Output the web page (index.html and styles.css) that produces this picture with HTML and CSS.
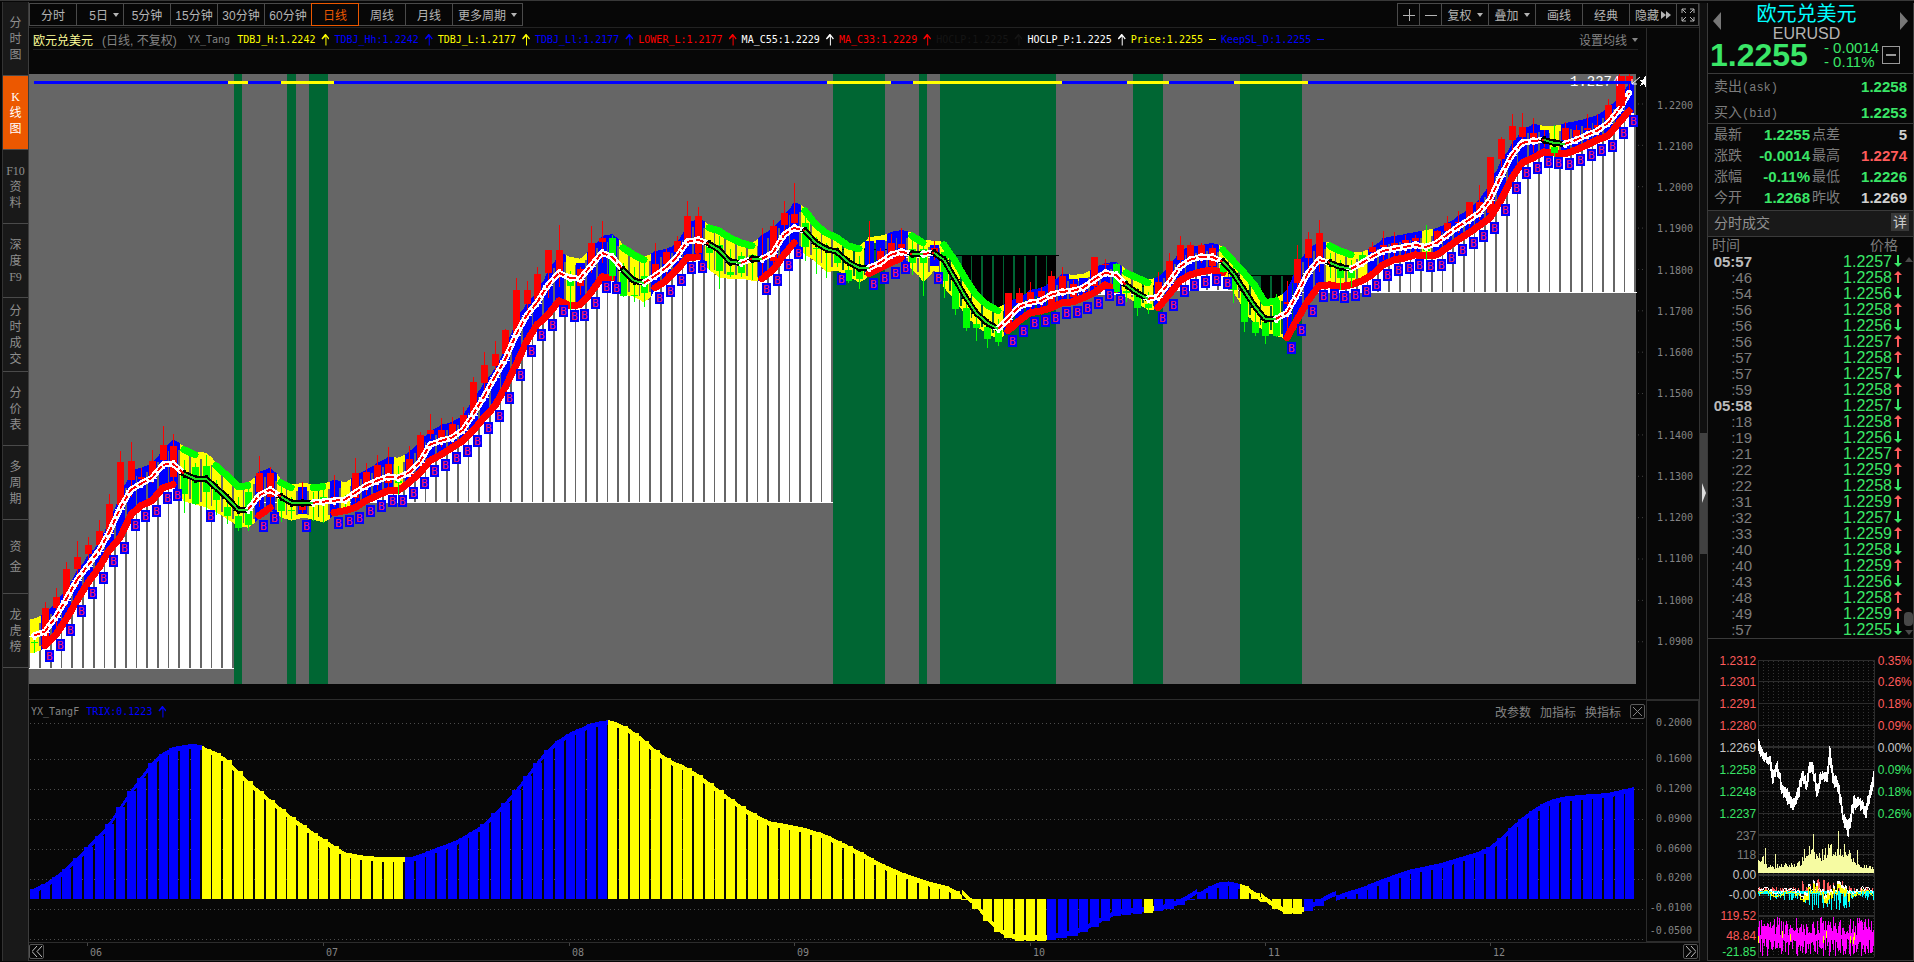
FILE: index.html
```html
<!DOCTYPE html>
<html lang="zh-CN">

<head>
    <meta charset="UTF-8">
    <meta name="viewport" content="width=device-width, initial-scale=1.0">
    <title>欧元兑美元 EURUSD</title>
    <link rel="stylesheet" href="styles.css">
</head>

<body>
    <nav class="side">
        <button>分<br>时<br>图</button>
        <button class="active">K<br>线<br>图</button>
        <button>F10<br>资<br>料</button>
        <button>深<br>度<br>F9</button>
        <button>分<br>时<br>成<br>交</button>
        <button>分<br>价<br>表</button>
        <button>多<br>周<br>期</button>
        <button class="loose">资<br>金</button>
        <button>龙<br>虎<br>榜</button>
    </nav>

    <main class="main">
        <div class="toolbar">
            <div class="group periods">
                <button>分时</button>
                <button class="drop">5日<i class="caret"></i></button>
                <button>5分钟</button>
                <button>15分钟</button>
                <button>30分钟</button>
                <button>60分钟</button>
                <button class="active">日线</button>
                <button>周线</button>
                <button>月线</button>
                <button class="more">更多周期<i class="caret"></i></button>
            </div>
            <div class="group tools">
                <button class="small" aria-label="放大"><svg width="12" height="12"><path d="M0 6.5H12M6.5 0V12"/></svg></button>
                <button class="small" aria-label="缩小"><svg width="12" height="12"><path d="M0 6.5H12"/></svg></button>
                <button>复权<i class="caret"></i></button>
                <button>叠加<i class="caret"></i></button>
                <button>画线</button>
                <button>经典</button>
                <button>隐藏<svg class="solid" width="10" height="8"><path d="M0 0L5 4L0 8ZM5 0L10 4L5 8Z"/></svg></button>
                <button class="small" aria-label="全屏"><svg width="14" height="14"><path d="M1 5V1H5M1 1L5 5M9 1H13V5M13 1L9 5M1 9V13H5M1 13L5 9M9 13H13V9M13 13L9 9"/></svg></button>
            </div>
        </div>

        <section class="panel price-panel">
            <div class="plot">
                <div class="info">
                    <span class="name">欧元兑美元</span>
                    <span class="mode">(日线, 不复权)</span>
                    <span class="formula">YX_Tang</span>
                    <span class="ind yellow">TDBJ_H:1.2242</span>
                    <span class="ind blue">TDBJ_Hh:1.2242</span>
                    <span class="ind yellow">TDBJ_L:1.2177</span>
                    <span class="ind blue">TDBJ_Ll:1.2177</span>
                    <span class="ind red">LOWER_L:1.2177</span>
                    <span class="ind white">MA_C55:1.2229</span>
                    <span class="ind red">MA_C33:1.2229</span>
                    <span class="ind black">HOCLP:1.2225</span>
                    <span class="ind white">HOCLP_P:1.2225</span>
                    <span class="ind yellow flat">Price:1.2255</span>
                    <span class="ind blue flat">KeepSL_D:1.2255</span>
                    <button class="ma-set">设置均线<i class="caret"></i></button>
                </div>
                <svg id="price" class="chart" viewBox="29 74 1617 610" preserveAspectRatio="none"></svg>
            </div>
            <div class="axis price-axis">
                <span>1.2200</span><span>1.2100</span><span>1.2000</span><span>1.1900</span><span>1.1800</span>
                <span>1.1700</span><span>1.1600</span><span>1.1500</span><span>1.1400</span><span>1.1300</span>
                <span>1.1200</span><span>1.1100</span><span>1.1000</span><span>1.0900</span>
            </div>
        </section>

        <section class="panel trix-panel">
            <div class="plot">
                <div class="subinfo">
                    <span class="formula">YX_TangF</span>
                    <span class="ind blue">TRIX:0.1223</span>
                    <div class="actions">
                        <button>改参数</button>
                        <button>加指标</button>
                        <button>换指标</button>
                        <button class="close" aria-label="关闭"><svg width="9" height="9"><path d="M0 0L9 9M9 0L0 9"/></svg></button>
                    </div>
                </div>
                <svg id="trix" class="chart" viewBox="29 720 1617 222" preserveAspectRatio="none"></svg>
            </div>
            <div class="axis trix-axis">
                <span>0.2000</span><span>0.1600</span><span>0.1200</span><span>0.0900</span>
                <span>0.0600</span><span>0.0200</span><span>-0.0100</span><span>-0.0500</span>
            </div>
        </section>

        <div class="dates">
            <div><button aria-label="向前"><svg width="10" height="11"><path d="M5 0L0 5.5L5 11M10 0L5 5.5L10 11"/></svg></button></div>
            <span>06</span><span>07</span><span>08</span><span>09</span><span>10</span><span>11</span><span>12</span>
            <div class="next"><button aria-label="向后"><svg width="10" height="11"><path d="M0 0L5 5.5L0 11M5 0L10 5.5L5 11"/></svg></button></div>
        </div>
    </main>

    <div class="splitter"><div class="handle"></div></div>

    <aside class="quote">
        <header class="head">
            <div class="title">
                <button class="arrow prev" aria-label="上一个"></button>
                <h1>欧元兑美元<small>EURUSD</small></h1>
                <button class="arrow next" aria-label="下一个"></button>
            </div>
            <div class="last">
                <strong>1.2255</strong>
                <div class="change"><span>- 0.0014</span><span>- 0.11%</span></div>
                <button class="fold" aria-label="收起"></button>
            </div>
        </header>
        <dl class="book">
            <dt>卖出<span>(ask)</span></dt><dd>1.2258</dd>
            <dt>买入<span>(bid)</span></dt><dd>1.2253</dd>
        </dl>
        <dl class="stats">
            <dt>最新</dt><dd>1.2255</dd><dt>点差</dt><dd class="plain">5</dd>
            <dt>涨跌</dt><dd>-0.0014</dd><dt>最高</dt><dd class="up">1.2274</dd>
            <dt>涨幅</dt><dd>-0.11%</dd><dt>最低</dt><dd>1.2226</dd>
            <dt>今开</dt><dd>1.2268</dd><dt>昨收</dt><dd class="plain">1.2269</dd>
        </dl>
        <div class="deals-head"><h2>分时成交</h2><button>详</button></div>
        <div class="deals-wrap">
            <table class="deals">
                <thead><tr><th>时间</th><th>价格</th></tr></thead>
                <tbody id="deals"></tbody>
            </table>
            <div class="scroll"><i class="tri"></i><i class="thumb"></i><i class="tri down"></i></div>
        </div>
        <svg id="mini" viewBox="1708 639 205 322"></svg>
    </aside>

    <script src="chart.js"></script>
</body>

</html>
```
FILE: styles.css
```css
* {
    box-sizing: border-box;
}

body {
    margin: 0;
    height: 100vh;
    min-height: 960px;
    display: flex;
    padding: 2px 0 1px 2px;
    background-color: #070707;
    border-top: 1px solid #383838;
    color: #848484;
    font-family: "DejaVu Sans Mono", "Noto Sans CJK SC", monospace;
    font-size: 12px;
    overflow: hidden;
}

button {
    margin: 0;
    padding: 0;
    border: none;
    background: none;
    color: inherit;
    font: inherit;
    cursor: pointer;
}

h1, h2, dl, dd {
    margin: 0;
    font-weight: normal;
}

button svg {
    fill: none;
    stroke: currentColor;
    stroke-width: 1;
}

button svg.solid {
    fill: currentColor;
    stroke: none;
    margin-left: 2px;
}

.caret {
    border: 3px solid transparent;
    border-top: 4px solid currentColor;
    border-bottom: none;
    margin-left: 5px;
}

/* left navigation */
.side {
    width: 27px;
    flex: none;
    display: flex;
    flex-direction: column;
    margin-top: -1px;
    background-color: #191919;
    border-left: 1px solid #333;
    border-right: 1px solid #3c3c3c;
}

.side button {
    height: 74px;
    border-bottom: 1px solid #4a4a4a;
    line-height: 16px;
    font-family: "Liberation Serif", "Noto Sans CJK SC", serif;
    color: #8e8e8e;
}

.side button.active {
    background-color: #ec5800;
    color: #fff;
}

.side button.loose {
    line-height: 20px;
}

/* main column */
.main {
    flex: 1;
    min-width: 0;
    display: flex;
    flex-direction: column;
    border-right: 1px solid #333;
    border-bottom: 1px solid #333;
}

.toolbar {
    height: 25px;
    flex: none;
    display: flex;
    justify-content: space-between;
    border-bottom: 1px solid #222;
    color: #b4b4b4;
}

.group {
    display: flex;
    height: 23px;
}

.group button {
    width: 48px;
    margin-right: -1px;
    border: 1px solid #4a4a4a;
    display: flex;
    align-items: center;
    justify-content: center;
    font-family: "Liberation Sans", "Noto Sans CJK SC", sans-serif;
    white-space: nowrap;
}

.group .more {
    width: 71px;
}

.group .drop {
    justify-content: flex-end;
    padding-right: 4px;
}

.group .small {
    width: 23px;
}

.tools button:last-child {
    margin-right: 0;
}

.group .active {
    border-color: #ec5800;
    color: #ec5800;
    z-index: 1;
}

.panel {
    display: flex;
    min-height: 0;
}

.price-panel {
    flex: 672;
    border-bottom: 1px solid #2c2c2c;
}

.trix-panel {
    flex: 243;
    border-bottom: 1px solid #2c2c2c;
}

.plot {
    flex: 1;
    min-width: 0;
    display: flex;
    flex-direction: column;
}

.chart {
    display: block;
    width: 100%;
    flex: 1;
    min-height: 0;
    shape-rendering: crispEdges;
}

.price-panel .chart {
    margin: 24px 0 15px;
}

.info {
    height: 22px;
    margin: 0 8px 0 4px;
    padding-top: 2px;
    flex: none;
    display: flex;
    align-items: center;
    border-bottom: 1px solid #222;
    white-space: nowrap;
}

.info .name {
    color: #ffff99;
    width: 69px;
}

.info .mode {
    width: 86px;
    font-family: "Liberation Sans", "Noto Sans CJK SC", sans-serif;
}

.formula {
    font-size: 10px;
    margin-right: 7px;
}

.ind {
    font-size: 10px;
    display: flex;
    align-items: center;
    margin-right: 5px;
}

/* up arrow behind each indicator value */
.ind::after {
    content: "";
    width: 8px;
    height: 12px;
    margin-left: 6px;
    background-color: currentColor;
    clip-path: polygon(4px 0, 8px 5px, 7px 6px, 5px 3px, 5px 12px, 4px 12px, 4px 3px, 1px 6px, 0 5px);
}

.ind.flat::after {
    width: 7px;
    height: 1px;
    clip-path: none;
}

.yellow { color: #ff0; }
.blue { color: #00f; }
.red { color: #f00; }
.white { color: #fff; }
.black { color: #151515; }

.ma-set {
    margin-left: auto;
    display: flex;
    align-items: center;
}

.subinfo {
    height: 20px;
    flex: none;
    display: flex;
    align-items: center;
    padding: 4px 1px 0 2px;
}

.actions {
    margin-left: auto;
    display: flex;
    align-items: center;
    gap: 9px;
}

.actions .close {
    width: 15px;
    height: 15px;
    border: 1px solid #5a5a5a;
    border-radius: 2px;
    display: flex;
    align-items: center;
    justify-content: center;
}

.axis {
    width: 53px;
    flex: none;
    border-left: 1px solid #2c2c2c;
    font-size: 10px;
    line-height: 12px;
    text-align: right;
    padding-right: 6px;
}

.price-axis {
    display: flex;
    flex-direction: column;
    padding-top: 57px;
    padding-bottom: 36px;
}

.price-axis span {
    flex: 1;
    display: flex;
    align-items: center;
    justify-content: flex-end;
}

.trix-axis {
    display: grid;
    grid-template-rows: 29fr 36fr 30fr 30fr 30fr 30fr 30fr 23fr 4fr;
    align-items: end;
    border: 1px solid #2c2c2c;
}

.dates {
    height: 17px;
    flex: none;
    display: grid;
    grid-template-columns: 58fr 236fr 246fr 225fr 236fr 235fr 225fr 193fr 16fr;
    align-items: center;
    font-size: 10px;
}

.dates span {
    padding: 2px 0 0 3px;
    line-height: 15px;
    background: linear-gradient(#444, #444) 0 0 / 1px 3px no-repeat;
}

.dates button {
    width: 15px;
    height: 15px;
    border: 1px solid #555;
    border-radius: 2px;
    display: flex;
    align-items: center;
    justify-content: center;
    color: #c4c4c4;
}

.splitter {
    width: 7px;
    flex: none;
    display: flex;
    flex-direction: column;
    justify-content: center;
    background-color: #101010;
}

.handle {
    height: 121px;
    margin-top: 22px;
    background-color: #414141;
    display: flex;
    align-items: center;
}

.handle::before {
    content: "";
    margin-left: 2px;
    border: 10px solid transparent;
    border-left: 4px solid #ddd;
    border-right: none;
}

/* right quote column */
.quote {
    width: 207px;
    flex: none;
    display: flex;
    flex-direction: column;
    border: 1px solid #3a3a3a;
    border-top: none;
    font-family: "Liberation Sans", "Noto Sans CJK SC", sans-serif;
    color: #3ae667;
}

.head {
    height: 71px;
    border-bottom: 1px solid #3a3a3a;
}

.title {
    display: flex;
    justify-content: space-between;
    padding: 0 5px;
    height: 38px;
}

.title h1 {
    padding-right: 8px;
    font-size: 20px;
    line-height: 23px;
    color: #0ff;
    text-align: center;
}

.title small {
    display: block;
    font-size: 16px;
    line-height: 16px;
    color: #b4b4b4;
}

.arrow {
    border: 9px solid transparent;
    height: 18px;
    margin-top: 9px;
}

.arrow.prev {
    border-left: none;
    border-right: 8px solid #777;
}

.arrow.next {
    border-right: none;
    border-left: 8px solid #777;
}

.last {
    display: flex;
    align-items: center;
    padding: 0 13px 0 2px;
}

.last strong {
    font-size: 32px;
    line-height: 24px;
    font-weight: bold;
}

.change {
    margin-left: auto;
    margin-right: 3px;
    font-size: 15px;
    line-height: 14px;
}

.change span {
    display: block;
}

.fold {
    width: 18px;
    height: 18px;
    border: 1px solid #999;
    background: linear-gradient(#999, #999) center / 10px 2px no-repeat;
}

dt {
    color: #7d7d7d;
    font-size: 14px;
}

dt span {
    font-family: "Liberation Mono", monospace;
    font-size: 12px;
}

dd {
    font-size: 15px;
    font-weight: bold;
    text-align: right;
}

.book {
    height: 50px;
    display: grid;
    grid-template-columns: 1fr 1fr;
    align-items: center;
    padding: 0 6px;
    border-bottom: 1px solid #3a3a3a;
    line-height: 24px;
}

.stats {
    height: 87px;
    display: grid;
    grid-template-columns: 28px 66px 30px 1fr;
    align-items: center;
    padding: 0 6px 3px;
    column-gap: 2px;
    line-height: 21px;
    border-bottom: 1px solid #3a3a3a;
}

.stats .up {
    color: #ff5b5b;
}

.stats .plain {
    color: #d0d0d0;
}

.deals-head {
    height: 26px;
    display: flex;
    align-items: center;
    justify-content: space-between;
    padding: 0 4px 2px 6px;
    background-color: #191919;
    border-bottom: 1px solid #3a3a3a;
}

.deals-head h2 {
    font-size: 14px;
    color: #909090;
}

.deals-head button {
    width: 18px;
    height: 18px;
    background-color: #383838;
    color: #ccc;
    font-size: 14px;
    line-height: 18px;
}

.deals-wrap {
    display: flex;
    height: 402px;
    border-bottom: 1px solid #3a3a3a;
}

.deals {
    flex: 1;
    border-collapse: collapse;
    font-size: 16px;
    line-height: 16px;
}

.deals th, .deals td {
    padding: 0;
    height: 16px;
}

.deals th {
    height: 17px;
    font-size: 14px;
    line-height: 16px;
    font-weight: normal;
    text-align: left;
    color: #7d7d7d;
    padding-left: 4px;
}

.deals th + th {
    text-align: right;
    padding-right: 6px;
}

.deals td:first-child {
    width: 44px;
    text-align: right;
    color: #7d7d7d;
    font-size: 15px;
}

.deals td.minute {
    color: #bbb;
    font-weight: bold;
}

.deals td + td {
    text-align: right;
    padding-right: 2px;
}

.deals svg {
    margin-left: 2px;
    fill: #3ae667;
}

.deals svg.up {
    fill: #ff5b5b;
}

.scroll {
    width: 9px;
    display: flex;
    flex-direction: column;
    align-items: center;
    padding: 20px 0 3px;
}

.tri {
    border: 4px solid transparent;
    border-top: none;
    border-bottom: 5px solid #484848;
}

.tri.down {
    transform: rotate(180deg);
}

.thumb {
    width: 9px;
    height: 14px;
    margin: auto 0 4px;
    border-radius: 4px;
    background-color: #484848;
}

#mini {
    width: 100%;
    shape-rendering: crispEdges;
    font-size: 12px;
}
```
FILE: chart.js
```js
const STEP = 10.705;
const FIRST = 34.3;
const BLUE = "#0000ff", YELLOW = "#ffff00", RED = "#ff0000", GREEN = "#00ff00";

// type: b = blue band, y = yellow, g = yellow with green cap, h = green cap + B,
//       m = yellow + B, n = yellow with a blue core + B
// [type, upper, lower, ma, wick top, body top, body bottom, wick bottom]
// values are thirds of a pixel below the base of the block
const blocks = [
    { base: 960, bars: [
        ["y",898,1000,948,950,965,969,1000], ["b",880,985,935,846,865,970,975], ["b",845,950,890,803,832,865,920],
        ["b",805,905,840,726,747,835,860], ["b",750,850,780,663,711,747,800], ["b",705,795,738,652,675,702,750],
        ["b",665,750,693,600,633,675,700], ["b",600,700,640,522,552,640,660], ["b",520,660,568,393,426,555,570],
        ["b",450,590,510,366,423,480,530], ["b",445,565,493,445,472,478,505], ["b",430,550,475,390,423,475,490],
        ["b",385,510,435,318,375,420,440], ["b",360,500,432,342,378,470,485], ["g",380,545,463,420,463,522,578],
        ["g",395,555,478,430,442,552,556], ["m",398,565,478,405,438,515,570], ["g",430,580,505,480,505,540,585],
        ["g",460,600,535,530,560,588,612], ["g",492,620,570,530,588,623,632], ["g",488,625,570,505,515,615,632],
        ["b",455,595,528,408,460,515,560], ["b",445,570,510,440,460,530,560], ["g",480,595,530,500,530,573,605],
        ["g",495,602,550,530,570,573,598], ["n",490,595,550,487,550,570,580], ["g",495,600,550,515,540,544,602],
        ["g",493,608,545,500,532,545,610], ["b",480,585,543,465,530,545,560], ["m",490,580,541,525,540,543,560],
        ["b",465,570,520,414,460,535,545], ["b",450,550,498,430,456,500,525], ["b",430,535,482,405,435,490,510],
        ["b",410,520,472,380,432,490,500], ["m",413,520,474,438,484,488,525], ["b",395,495,460,378,418,465,475],
        ["b",360,465,425,335,345,430,440], ["b",332,430,375,282,330,342,357], ["b",315,410,362,294,330,360,380],
        ["b",305,390,353,292,312,345,370], ["b",285,370,330,262,285,325,340], ["b",235,340,285,170,186,280,300]
    ] },
    { base: 540, bars: [
        ["b",605,720,650,516,555,608,640], ["b",565,685,590,483,522,557,580], ["b",500,630,540,447,450,522,540],
        ["b",410,560,465,294,330,460,470], ["b",370,490,405,303,330,372,400], ["b",330,440,368,262,282,360,380],
        ["b",270,410,315,225,210,278,355], ["b",220,370,280,135,210,280,320], ["m",232,385,294,273,300,318,390],
        ["n",238,380,296,262,267,318,345], ["b",200,345,258,138,189,262,280], ["b",168,298,218,123,174,186,250],
        ["b",162,300,232,165,174,288,300], ["g",195,345,270,250,270,347,350], ["g",215,350,303,262,344,348,365],
        ["g",230,368,310,235,288,338,380], ["b",212,330,288,189,252,290,300], ["b",207,310,265,207,216,252,290],
        ["b",190,275,232,168,183,215,240], ["b",130,240,187,63,108,180,200], ["b",115,238,180,81,108,220,230],
        ["g",135,270,192,180,190,220,270], ["g",145,293,210,168,195,272,326], ["g",165,297,245,207,276,286,290],
        ["g",180,297,248,215,228,278,290], ["g",190,303,238,222,225,232,300], ["b",165,303,237,144,235,238,300],
        ["b",140,275,218,120,138,243,250], ["b",105,230,165,63,99,135,170], ["b",66,195,143,9,102,130,150],
        ["g",85,225,152,108,130,200,243], ["g",125,250,188,170,204,207,282], ["g",150,275,207,190,206,210,293],
        ["h",165,272,215,200,215,250,262], ["g",190,290,245,240,270,302,310], ["g",198,310,264,228,270,297,327],
        ["n",170,288,264,124,255,262,270], ["n",168,270,250,205,213,240,260], ["b",155,255,225,162,189,220,230],
        ["b",150,240,215,144,192,205,215], ["g",158,270,222,180,207,248,285], ["g",180,305,222,190,207,248,348],
        ["n",182,270,220,183,205,220,240], ["g",185,325,240,200,215,303,353], ["g",235,370,298,290,300,387,405],
        ["g",290,410,355,350,384,444,452], ["g",335,440,398,400,432,444,483], ["g",365,465,430,420,440,477,504],
        ["g",385,478,447,418,450,486,498], ["b",362,460,418,339,339,440,450], ["b",350,430,382,323,339,370,380],
        ["b",330,405,370,306,336,360,390], ["b",325,398,362,320,333,350,410], ["b",305,390,345,272,288,377,385],
        ["b",283,375,335,261,288,345,355], ["n",285,372,332,300,312,350,360], ["n",283,360,325,310,330,334,345],
        ["b",262,345,300,231,231,318,330], ["b",250,320,280,237,253,256,270], ["b",245,335,285,250,252,335,340],
        ["g",270,350,315,300,334,338,365], ["g",285,375,340,325,340,384,407], ["g",300,390,357,335,372,384,402],
        ["b",290,390,350,276,306,350,370], ["b",255,350,310,218,243,310,320], ["b",210,310,260,168,195,240,260],
        ["b",200,290,240,186,195,235,250], ["b",195,283,232,190,195,225,250], ["b",190,275,230,195,204,258,265],
        ["h",200,285,245,230,250,275,280], ["g",235,335,280,260,275,330,370], ["g",270,400,330,320,335,426,455],
        ["g",310,435,380,390,426,458,468], ["g",360,460,418,410,426,468,492], ["g",355,468,418,342,360,468,470],
        ["b",330,480,400,303,366,371,460], ["b",250,425,345,195,237,310,350], ["b",205,370,280,156,177,235,270],
        ["b",182,325,240,120,159,240,275]
    ] },
    { base: 0, bars: [
        ["h",728,860,788,760,784,788,835], ["h",745,868,800,780,805,835,870], ["h",757,860,808,780,812,835,860],
        ["m",755,848,790,755,765,790,800], ["b",740,830,770,725,742,757,770], ["b",715,800,753,693,736,742,780],
        ["b",708,785,748,697,730,738,770], ["b",703,780,740,706,720,730,770], ["b",697,770,735,705,714,724,760],
        ["m",690,775,740,675,748,754,800], ["b",683,772,730,690,693,725,740], ["b",670,750,705,648,669,693,720],
        ["b",648,725,680,633,666,669,700], ["b",625,705,660,605,605,660,680], ["b",600,685,640,555,606,640,660],
        ["b",540,660,600,471,471,640,650], ["b",480,605,527,411,417,477,500], ["b",430,540,465,342,378,420,450],
        ["b",388,495,430,339,381,410,440], ["b",372,480,422,354,400,415,460], ["n",377,462,420,390,418,421,440],
        ["m",378,465,430,375,442,460,480], ["b",370,468,432,366,384,420,440], ["b",363,455,420,375,390,410,430],
        ["b",355,440,405,342,384,390,430], ["b",345,425,392,342,375,385,410], ["b",320,415,370,297,315,360,380],
        ["b",290,375,330,222,228,320,340], ["b",250,340,280,222,228,243,290]
    ] }
];

const bars = [];
blocks.forEach((block) => {
    block.bars.forEach((row) => {
        const v = row.slice(1).map((n) => Math.round((n + block.base) / 3));
        bars.push({
            x: Math.round(FIRST + bars.length * STEP),
            type: row[0], up: v[0], low: v[1], ma: v[2],
            wt: v[3], bt: v[4], bb: v[5], wb: v[6]
        });
    });
});

const rect = (x, y, w, h, fill) => `<rect x="${x}" y="${y}" width="${w}" height="${Math.max(h, 0)}" fill="${fill}"/>`;
const line = (d, color, width, extra = "") => `<path d="${d}" fill="none" stroke="${color}" stroke-width="${width}" ${extra}/>`;
const round = 'stroke-linecap="round" stroke-linejoin="round"';

// continuous lines over runs of bars that pass the test
function runs(test, value, color, width) {
    let out = "", d = "";
    bars.concat({ type: "" }).forEach((b) => {
        if (b.type && test(b)) {
            d += `${d ? "L" : "M"}${b.x} ${value(b)}`;
        } else {
            if (d) out += line(d, color, width, round);
            d = "";
        }
    });
    return out;
}

function drawPrice() {
    let s = rect(29, 74, 1607, 610, "#666666");

    [[234, 242], [287, 296], [309, 328], [833, 885], [919, 927], [940, 1056], [1133, 1163], [1240, 1302]]
        .forEach(([a, b]) => { s += rect(a, 74, b - a, 610, "#006633"); });

    // stop levels: white below the band, black above it
    [[29, 234, 668], [249, 833, 502], [893, 930, 257], [1072, 1133, 294], [1167, 1240, 290], [1302, 1637, 292]].forEach(([a, b, y]) => {
        bars.forEach((bar) => {
            if (bar.x > a && bar.x < b && bar.low < y) s += rect(bar.x - 4, bar.low - 3, 9, y - bar.low + 3, "#fff");
        });
        s += rect(a, y, b - a, 1, "#fff");
    });
    [[822, 889, 249], [941, 1059, 255], [1137, 1167, 286], [1235, 1305, 275]].forEach(([a, b, y]) => {
        bars.forEach((bar) => {
            if (bar.x > a && bar.x < b && bar.up > y + 8) s += rect(bar.x - 4, y, 9, bar.up - y + 3, "#000");
        });
        s += rect(a, y, b - a, 1, "#000");
    });

    // band
    bars.forEach((b, i) => {
        const prev = bars[i - 1] || b, next = bars[i + 1] || b;
        const color = b.type === "b" ? BLUE : YELLOW;
        const ul = (prev.up + b.up) / 2, ur = (next.up + b.up) / 2;
        const ll = (prev.low + b.low) / 2, lr = (next.low + b.low) / 2;
        const l = b.x - 4, r = (bars[i + 1] ? bars[i + 1].x : b.x + 9) - 4;
        s += `<path fill="${color}" d="M${l} ${ul}L${b.x} ${b.up}L${r} ${ur}v7H${b.x + 5}V${lr - 4}H${r}v4L${b.x} ${b.low}L${l} ${ll}Z"/>`;
        if (b.type === "n") s += rect(b.x - 4, b.up + 4, 9, b.low - b.up - 8, BLUE);
    });

    s += runs((b) => "bmnh".includes(b.type), (b) => b.low - 2, RED, 7);
    s += runs((b) => "gh".includes(b.type), (b) => b.up + 3, GREEN, 7);

    // candles
    bars.forEach((b, i) => {
        const color = "ygmh".includes(b.type) || i === 54 || i === 101 ? GREEN : RED;
        s += rect(b.x, b.wt, 1, b.wb - b.wt, color);
        s += rect(b.x - 3, b.bt, 7, Math.max(b.bb - b.bt, 1), color);
    });

    // moving average with an outline
    let outer = "", inner = "";
    for (let i = 0; i < bars.length - 1; i++) {
        const a = bars[i], b = bars[i + 1];
        const down = a.type !== "b" && b.ma >= a.ma && !(a.type === "m" && b.type === "n");
        const color = down ? "#000" : "#fff";
        const d = `M${a.x} ${a.ma}L${b.x} ${b.ma}`;
        outer += line(d, color, 6, round);
        inner += down ? line(d, "#22dd22", 2) : line(d, RED, 2, 'stroke-dasharray="6 3"');
        outer += rect(a.x - 5, a.ma, 10, 1, color);
        outer += rect(a.x - 1, a.ma - 4, 3, 8, color);
    }
    s += outer + inner;

    bars.forEach((b) => {
        if (!"bmnh".includes(b.type)) return;
        s += rect(b.x, b.low + 2, 9, 12, BLUE);
        s += `<text x="${b.x + 1}" y="${b.low + 12}" font-size="11" fill="#ff1a5c">B</text>`;
    });

    s += `<text x="1570" y="86" font-size="14" font-family="Liberation Mono, monospace" fill="#fff">1.2274</text>`;
    s += rect(1618, 76, 7, 30, RED);

    s += rect(34, 81, 1597, 3, BLUE);
    [[228, 248], [281, 334], [827, 891], [913, 1062], [1127, 1169], [1234, 1308]]
        .forEach(([a, b]) => { s += rect(a, 81, b - a, 3, YELLOW); });

    s += line("M1632 84L1640 77M1632 84V79M1632 84H1637", "#fff", 1);
    s += `<path fill="#fff" d="M1646 75V88L1644 84L1640 86L1642 82L1639 80H1643Z"/>`;

    for (let y = 104; y < 660; y += 41.4) s += line(`M1638 ${y}H1646`, "#444", 1, 'stroke-dasharray="1 3"');
    document.getElementById("price").innerHTML = s;
}

const trix = [
    [30, 891], [34, 888], [45, 883], [61, 872], [82, 852], [106, 827], [131, 790], [151, 763], [162, 753], [173, 747],
    [190, 744], [200, 744], [206, 748], [216, 752], [227, 759], [238, 770], [249, 781], [269, 798], [290, 815],
    [318, 835], [345, 852], [367, 856], [400, 857], [412, 857], [433, 849], [457, 840], [482, 825], [510, 797],
    [531, 770], [543, 754], [555, 742], [571, 732], [592, 723], [606, 720], [613, 721], [627, 727], [640, 736],
    [655, 749], [670, 760], [683, 765], [700, 775], [732, 799], [750, 811], [769, 821], [787, 824], [806, 828],
    [825, 834], [842, 842], [860, 851], [879, 862], [904, 873], [928, 881], [945, 885], [958, 891], [977, 908],
    [988, 921], [1000, 933], [1010, 938], [1020, 940], [1042, 940], [1056, 938], [1067, 936], [1080, 932], [1094, 926],
    [1106, 919], [1118, 914], [1150, 911], [1165, 909], [1178, 905], [1192, 897], [1201, 891], [1210, 886],
    [1219, 882], [1230, 881], [1245, 885], [1257, 893], [1268, 904], [1286, 913], [1299, 913], [1312, 908],
    [1330, 898], [1345, 892], [1362, 887], [1384, 878], [1411, 869], [1440, 863], [1460, 857], [1480, 851], [1490, 846],
    [1500, 838], [1520, 819], [1532, 810], [1545, 802], [1556, 798], [1567, 796], [1590, 794], [1607, 793], [1634, 787]
];

function at(points, x) {
    const i = Math.max(1, points.findIndex((p) => p[0] >= x));
    const [x0, y0] = points[i - 1], [x1, y1] = points[i];
    return y0 + (y1 - y0) * (x - x0) / (x1 - x0);
}

function drawTrix() {
    const zero = 898;
    const falling = (x) => [[201, 403], [608, 1045], [1144, 1154], [1240, 1301]].some(([a, b]) => x > a && x < b);
    let s = "";
    [723, 759, 789, 819, 849, 879, 909, 939].forEach((y) => {
        s += line(`M30 ${y + 0.5}H1646`, "#4c4c4c", 1, 'stroke-dasharray="1 3"');
    });
    bars.forEach((b, i) => {
        const color = falling(b.x) ? YELLOW : BLUE;
        const y = at(trix, b.x);
        s += rect(b.x - 4, Math.min(y, zero) + 1, 9, Math.abs(zero - y), color);

        // thick edge that joins this bar to the next one
        const l = b.x - 4, r = bars[i + 1] ? bars[i + 1].x - 4 : b.x + 5;
        const yl = at(trix, l), yr = at(trix, r);
        const t = y < zero ? 5 : -5;
        s += `<path fill="${color}" d="M${l} ${yl}L${b.x} ${y}L${r} ${yr}v${t}L${b.x} ${y + t}L${l} ${yl + t}Z"/>`;
    });
    document.getElementById("trix").innerHTML = s;
}

const deals = [
    ["05:57", 57, 0], [":46", 58, 1], [":54", 56, 0], [":56", 58, 1], [":56", 56, 0], [":56", 57, 1],
    [":57", 58, 1], [":57", 57, 0], [":59", 58, 1], ["05:58", 57, 0], [":18", 58, 1], [":19", 56, 0],
    [":21", 57, 1], [":22", 59, 1], [":22", 58, 0], [":31", 59, 1], [":32", 57, 0], [":33", 59, 1],
    [":40", 58, 0], [":40", 59, 1], [":43", 56, 0], [":48", 58, 1], [":49", 59, 1], [":57", 55, 0]
];

function drawDeals() {
    document.getElementById("deals").innerHTML = deals.map(([time, price, up]) => {
        const d = up ? "M4 0L8 4H5V12H3V4H0Z" : "M3 0H5V8H8L4 12L0 8H3Z";
        return `<tr><td class="${time.length > 3 ? "minute" : ""}">${time}</td>` +
            `<td>1.22${price}<svg class="${up ? "up" : ""}" width="8" height="12"><path d="${d}"/></svg></td></tr>`;
    }).join("");
}

// small repeatable noise for the day chart
let seed = 7;
function noise() {
    seed = (seed * 16807) % 2147483647;
    return seed / 2147483647;
}

function drawMini() {
    const L = 1758, R = 1874;
    let s = "";
    for (let x = L + 5; x < R; x += 5) s += line(`M${x + 0.5} 661V958`, "#333", 1, 'stroke-dasharray="1 2"');
    [660, 681, 703, 725, 769, 791, 813, 855, 896, 958].forEach((y) => { s += rect(L, y, R - L, 1, "#2c2c2c"); });
    [746, 834, 875, 916].forEach((y) => { s += rect(L, y, R - L, 2, "#2c2c2c"); });
    s += rect(L, 660, 1, 298, "#2c2c2c") + rect(R, 660, 1, 298, "#2c2c2c");

    const day = [[0, 747], [6, 757], [11, 762], [14, 779], [18, 765], [23, 788], [33, 803], [37, 801], [44, 777], [48, 786],
        [51, 764], [54, 768], [58, 790], [63, 774], [68, 776], [71, 753], [74, 776], [80, 788], [84, 818], [89, 830],
        [95, 803], [100, 803], [107, 811], [112, 790], [116, 773]];
    const vol = [[0, 13], [5, 15], [10, 7], [40, 10], [47, 16], [50, 25], [60, 18], [70, 26], [86, 27], [95, 14], [102, 8], [116, 7]];
    let white = "", yellow = "", last = 747;
    const price = [], volume = [];
    for (let x = 0; x < 116; x++) {
        const y = at(day, x) + noise() * 6 - 3;
        const top = Math.min(y, last) - 2 - noise() * 3;
        price.push(rect(L + x, top, 1, Math.max(y, last) - top + 3 + noise() * 3, "#fff"));
        last = y;
        const peak = noise() > 0.93 ? 14 : 0;
        const v = at(vol, x) * (0.6 + noise() * 0.6) + peak;
        volume.push(rect(L + x, 874 - v, 1, v, "#f6fba2"));
    }
    s += price.join("") + volume.join("");
    for (let x = 0; x < 116; x++) {
        const big = x > 42 && x < 92 ? 1 : 0.4;
        const wave = Math.sin(x / 4) * 5 * big + (noise() - 0.5) * 12 * big;
        const red = noise() * 14 * big;
        if (noise() > 0.3) s += rect(L + x, 893 - red, 1, red, "#ff5b5b");
        s += rect(L + x, 892, 1, 3 + (noise() > 0.5 ? noise() * 16 * big : 0), "#0ff");
        white += `${x ? "L" : "M"}${L + x} ${892 - wave - 1}`;
        yellow += `${x ? "L" : "M"}${L + x} ${893 - wave + 1}`;
    }
    s += line(white, "#fff", 1) + line(yellow, YELLOW, 1);
    for (let x = 0; x < 116; x++) {
        const a = 918 + noise() * 18, b = 957 - noise() * 18;
        s += rect(L + x, a, 1, b - a, "#f0f");
        if (noise() > 0.95) s += rect(L + x, 930 + noise() * 8, 1, 7, YELLOW);
    }

    const left = [["1.2312", 661, "r"], ["1.2301", 682, "r"], ["1.2291", 704, "r"], ["1.2280", 726, "r"], ["1.2269", 748, "w"],
        ["1.2258", 770, "g"], ["1.2248", 792, "g"], ["1.2237", 814, "g"], ["237", 836, "d"], ["118", 856, "d"],
        ["0.00", 876, "w"], ["-0.00", 896, "w"], ["119.52", 917, "r"], ["48.84", 937, "r"], ["-21.85", 953, "g"]];
    const right = ["0.35%", "0.26%", "0.18%", "0.09%", "0.00%", "0.09%", "0.18%", "0.26%"];
    const tone = { r: "#ff5b5b", w: "#c8c8c8", g: "#3ae667", d: "#7d7d7d" };
    left.forEach(([text, y, c], i) => {
        s += `<text x="1756" y="${y + 4}" text-anchor="end" fill="${tone[c]}">${text}</text>`;
        if (right[i]) s += `<text x="1878" y="${y + 4}" fill="${tone[c]}">${right[i]}</text>`;
    });
    document.getElementById("mini").innerHTML = s;
}

drawPrice();
drawTrix();
drawDeals();
drawMini();
```
